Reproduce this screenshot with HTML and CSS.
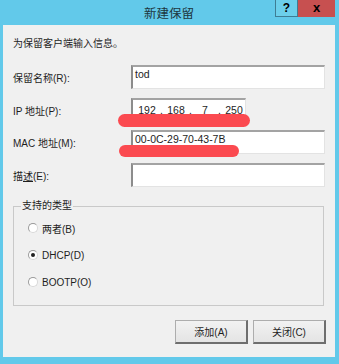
FILE: index.html
```html
<!DOCTYPE html>
<html lang="zh-CN">
<head>
    <meta charset="UTF-8">
    <title>新建保留</title>
    <link rel="stylesheet" href="styles.css">
</head>
<body>
    <div class="window">
        <!-- 标题栏 -->
        <div class="titlebar">
            <div class="title">新建保留</div>
            <div class="controls">
                <div class="ctl help">?</div>
                <div class="ctl close">x</div>
            </div>
        </div>

        <!-- 对话框内容 -->
        <div class="client">
            <p class="intro">为保留客户端输入信息。</p>

            <div class="form">
                <label>保留名称(R):</label>
                <div class="field">tod</div>

                <label>IP 地址(P):</label>
                <div class="field ip">
                    <span class="oct">192</span><span class="dot">.</span>
                    <span class="oct">168</span><span class="dot">.</span>
                    <span class="oct">7</span><span class="dot">.</span>
                    <span class="oct">250</span>
                </div>

                <label>MAC 地址(M):</label>
                <div class="field">00-0C-29-70-43-7B</div>

                <label>描<u>述</u>(E):</label>
                <div class="field"></div>
            </div>

            <fieldset class="group">
                <legend>支持的类型</legend>
                <div class="radio"><span class="dot-box"></span>两者(B)</div>
                <div class="radio"><span class="dot-box checked"></span>DHCP(D)</div>
                <div class="radio"><span class="dot-box"></span>BOOTP(O)</div>
            </fieldset>

            <div class="actions">
                <button class="btn">添加(A)</button>
                <button class="btn">关闭(C)</button>
            </div>
        </div>

        <!-- 红色涂抹标记 -->
        <div class="mark mark-ip"></div>
        <div class="mark mark-mac"></div>
    </div>
</body>
</html>
```

FILE: styles.css
```css
:root {
    --frame: #62c9ea;
    --client: #f0f0f0;
    --text: #1e1e1e;
    --mark: #fb4a50;
}

* {
    margin: 0;
    padding: 0;
    box-sizing: border-box;
}

body {
    background: var(--frame);
    font: 10px "Liberation Sans", "Noto Sans CJK SC", sans-serif;
    color: var(--text);
}

.window {
    position: relative;
    width: 339px;
    height: 364px;
    padding: 0 4px 7px 3px;
    display: flex;
    flex-direction: column;
}

/* 标题栏 */
.titlebar {
    height: 25px;
    display: grid;
    grid-template-columns: 1fr auto 1fr;
}

.title {
    grid-column: 2;
    font-size: 12.5px;
    line-height: 26px;
    color: #1d3640;
    font-family: "Noto Sans CJK SC", sans-serif;
}

.controls {
    grid-column: 3;
    justify-self: end;
    display: flex;
    height: 17px;
}

.ctl {
    height: 17px;
    text-align: center;
    font-weight: bold;
    font-size: 12px;
    line-height: 16px;
    color: #000;
}

.help {
    width: 23px;
    background: #6ccfeb;
    border: 1px solid #3e7d94;
    border-top: 0;
}

.close {
    width: 37px;
    background: #c75050;
    font-size: 13px;
}

/* 内容区 */
.client {
    flex: 1;
    background: var(--client);
    padding: 12px 10px 0 10px;
}

.intro {
    line-height: 14px;
}

.form {
    margin-top: 14px;
    display: grid;
    grid-template-columns: 118px 194px;
    grid-auto-rows: 24px;
    row-gap: 8.5px;
    align-items: center;
}

.form label {
    padding-top: 1px;
}

.field {
    height: 24px;
    background: #fff;
    border-style: solid;
    border-width: 2px 1px 1px 2px;
    border-color: #a3a3a3 #e3e3e3 #e3e3e3 #8c8c8c;
    padding: 1px 2px;
    font-size: 10.5px;
    line-height: 12px;
}

.field.ip {
    width: 115px;
    display: flex;
    align-items: center;
    padding: 0 0 0 3px;
}

.oct {
    width: 22px;
    text-align: center;
}

.dot {
    width: 7px;
    text-align: center;
}

/* 分组框 */
.group {
    margin: 12.5px 1px 0 0;
    border: 1px solid #c9c9c9;
    padding: 8px 0 16px 0;
    min-width: 0;
}

.group legend {
    margin-left: 7px;
    padding: 0 1px;
    line-height: 14px;
}

.radio {
    display: flex;
    align-items: center;
    gap: 4px;
    height: 14px;
    margin-bottom: 13px;
    padding-left: 14px;
}

.radio:last-child {
    margin-bottom: 0;
}

.dot-box {
    width: 10px;
    height: 10px;
    border-radius: 50%;
    background: #fff;
    border: 1px solid #9a9a9a;
    border-right-color: #d8d8d8;
    border-bottom-color: #d8d8d8;
    display: flex;
    align-items: center;
    justify-content: center;
}

.dot-box.checked::after {
    content: "";
    width: 4px;
    height: 4px;
    border-radius: 50%;
    background: #222;
}

/* 底部按钮 */
.actions {
    margin-top: 14px;
    display: flex;
    justify-content: flex-end;
    gap: 5px;
    margin-right: -1px;
}

.btn {
    width: 73px;
    height: 24px;
    font: inherit;
    color: var(--text);
    background: linear-gradient(#f2f2f2, #e4e4e4);
    border: 1px solid #adadad;
    border-right: 2px solid #6e6e6e;
    border-bottom: 2px solid #6e6e6e;
}

/* 红色标记 */
.mark {
    position: absolute;
    background: var(--mark);
    border-radius: 7px;
}

.mark-ip {
    left: 118px;
    top: 114px;
    width: 132px;
    height: 13px;
}

.mark-mac {
    left: 119px;
    top: 145px;
    width: 120px;
    height: 12px;
}
```
